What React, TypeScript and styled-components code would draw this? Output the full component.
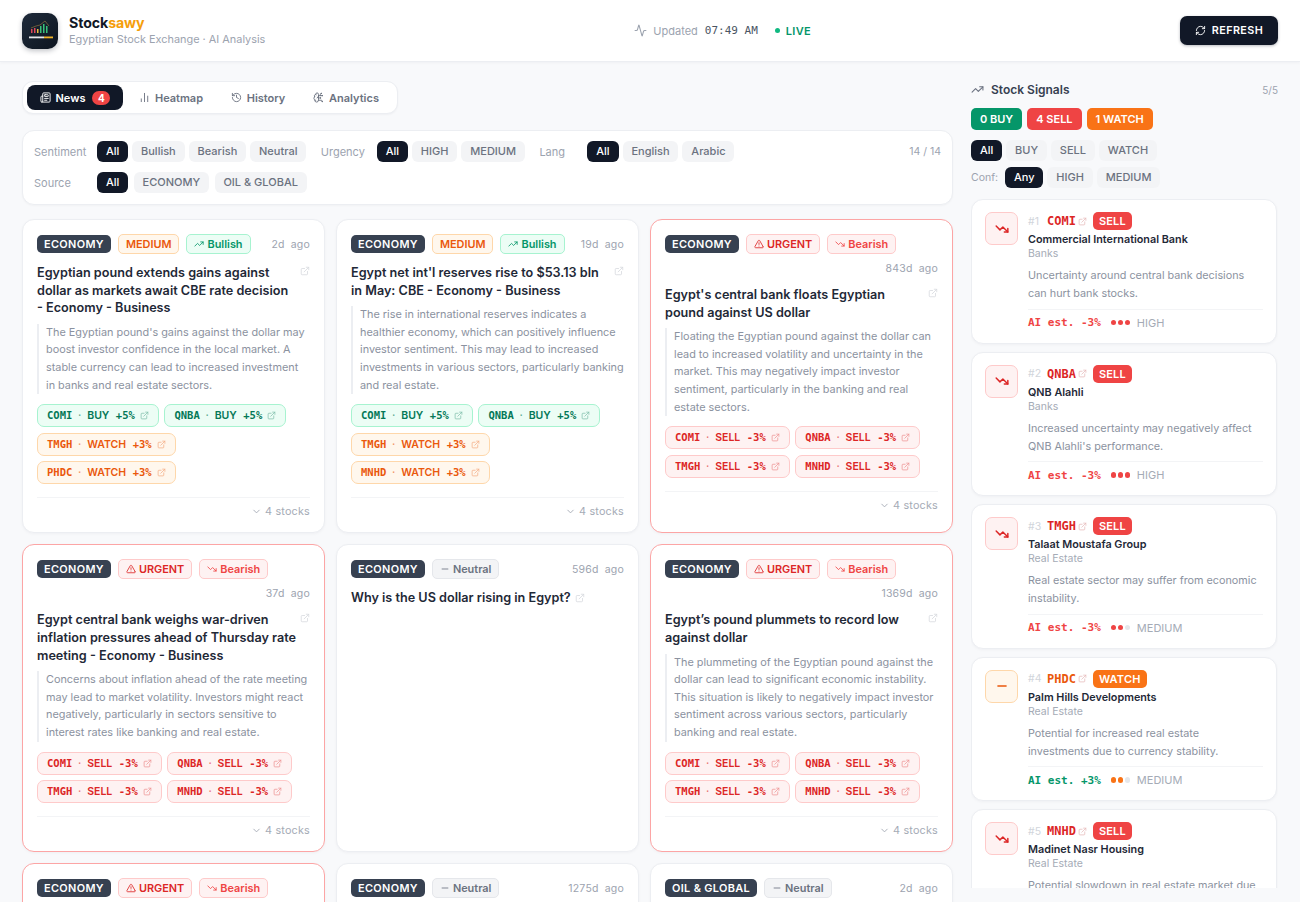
import type { ReactNode } from "react";
import styled, { createGlobalStyle } from "styled-components";
import {
  Activity,
  BrainCircuit,
  ChartNoAxesColumn,
  ChevronDown,
  ExternalLink,
  History,
  Minus,
  Newspaper,
  RefreshCw,
  TrendingDown,
  TrendingUp,
  TriangleAlert,
} from "lucide-react";

type Signal = "BUY" | "SELL" | "WATCH";
type Mood = "Bullish" | "Bearish" | "Neutral";

const MONO = `"DejaVu Sans Mono", "Liberation Mono", monospace`;

const signalColors = {
  BUY: { bg: "#ecfdf5", border: "#a7f3d0", text: "#047857", solid: "#059669" },
  SELL: { bg: "#fef2f2", border: "#fecaca", text: "#dc2626", solid: "#ef4444" },
  WATCH: { bg: "#fff7ed", border: "#fed7aa", text: "#ea580c", solid: "#f97316" },
};

const GlobalStyle = createGlobalStyle`
  html, body {
    margin: 0;
    height: 100%;
    overflow: hidden;
    background: #f8f9fb;
    font-family: Inter, "Noto Sans", sans-serif;
    color: #111827;
  }
  * { box-sizing: border-box; }
`;

const Page = styled.div`
  height: 100vh;
  display: flex;
  flex-direction: column;
  overflow: hidden;
`;

const Header = styled.header`
  flex: 0 0 62px;
  height: 62px;
  background: #fff;
  border-bottom: 1px solid #eceef2;
  box-shadow: 0 1px 3px rgba(17, 24, 39, 0.04);
  padding: 0 22px;
  display: flex;
  justify-content: space-between;
  align-items: center;
`;
const Brand = styled.div`
  display: flex;
  align-items: center;
  gap: 11px;
`;
const LogoBox = styled.div`
  width: 36px;
  height: 36px;
  border-radius: 10px;
  overflow: hidden;
  box-shadow: 0 2px 5px rgba(17, 24, 39, 0.25);
  svg { display: block; }
`;
const BrandName = styled.div`
  font-size: 14.2px;
  font-weight: 700;
  line-height: 18px;
  letter-spacing: -0.1px;
  span { color: #f59e0b; }
`;
const BrandSub = styled.div`
  font-size: 10.9px;
  line-height: 15px;
  color: #9ca3af;
`;
const Status = styled.div`
  display: flex;
  align-items: center;
  font-size: 11px;
  color: #9ca3af;
  svg { margin-right: 6px; }
`;
const Clock = styled.span`
  font-family: ${MONO};
  font-size: 11px;
  font-weight: 500;
  color: #4b5563;
  margin-left: 7px;
`;
const Live = styled.span`
  display: flex;
  align-items: center;
  gap: 6px;
  margin-left: 17px;
  font-size: 11px;
  font-weight: 600;
  letter-spacing: 0.3px;
  color: #059669;
  &::before {
    content: "";
    width: 5px;
    height: 5px;
    border-radius: 50%;
    background: #10b981;
  }
`;
const RefreshButton = styled.button`
  height: 29px;
  width: 98px;
  border: 0;
  border-radius: 7px;
  background: #111827;
  color: #fff;
  font: 600 10.8px Inter, sans-serif;
  letter-spacing: 0.4px;
  display: flex;
  align-items: center;
  justify-content: center;
  gap: 6px;
  box-shadow: 0 1px 3px rgba(17, 24, 39, 0.3);
`;

const Main = styled.main`
  flex: 1;
  min-height: 0;
  display: flex;
  gap: 18px;
  padding: 19px 22px 0;
  overflow: hidden;
`;
const LeftColumn = styled.div`
  flex: 1;
  min-width: 0;
`;
const RightColumn = styled.aside`
  flex: 0 0 307px;
  width: 307px;
  margin-bottom: 14px;
  display: flex;
  flex-direction: column;
  min-height: 0;
`;

const Tabs = styled.nav`
  display: inline-flex;
  height: 33px;
  padding: 3px 4px;
  gap: 2px;
  background: #fff;
  border: 1px solid #eceef2;
  border-radius: 11px;
  box-shadow: 0 1px 2px rgba(17, 24, 39, 0.04);
  vertical-align: top;
`;
const Tab = styled.div<{ $active?: boolean; $w: number }>`
  width: ${(p) => p.$w}px;
  border-radius: 8px;
  display: flex;
  align-items: center;
  justify-content: center;
  gap: 5px;
  font-size: 11px;
  font-weight: 600;
  color: ${(p) => (p.$active ? "#fff" : "#6b7280")};
  background: ${(p) => (p.$active ? "#111827" : "transparent")};
`;
const TabCount = styled.span`
  margin-left: 2px;
  min-width: 18px;
  height: 14px;
  padding: 0 5px;
  border-radius: 7px;
  background: #ef4444;
  color: #fff;
  font-size: 10px;
  line-height: 14px;
  text-align: center;
  font-weight: 700;
`;

const FilterPanel = styled.section`
  margin-top: 16px;
  height: 75px;
  padding: 10px 11px;
  background: #fff;
  border: 1px solid #eceef2;
  border-radius: 12px;
  box-shadow: 0 1px 2px rgba(17, 24, 39, 0.03);
  display: flex;
  flex-direction: column;
  gap: 10px;
`;
const FilterRow = styled.div`
  display: flex;
  align-items: center;
  height: 21px;
`;
const FilterGroup = styled.div<{ $gap?: number }>`
  display: flex;
  align-items: center;
  gap: ${(p) => p.$gap ?? 4}px;
  margin-right: 14.5px;
`;
const FilterLabel = styled.span<{ $w: number }>`
  width: ${(p) => p.$w - 4}px;
  font-size: 11px;
  color: #9ca3af;
`;
const Pill = styled.span<{ $active?: boolean }>`
  height: 21px;
  line-height: 21px;
  padding: 0 8.9px;
  border-radius: 6px;
  font-size: 11px;
  font-weight: 500;
  white-space: nowrap;
  color: ${(p) => (p.$active ? "#fff" : "#6b7280")};
  background: ${(p) => (p.$active ? "#111827" : "#f3f4f6")};
`;
const Count = styled.span`
  margin-left: auto;
  font-size: 10.5px;
  color: #9ca3af;
`;

const NewsGrid = styled.div`
  margin-top: 14px;
  display: grid;
  grid-template-columns: repeat(3, 1fr);
  gap: 11px;
`;
const Card = styled.article<{ $urgent?: boolean }>`
  background: #fff;
  border: 1px solid ${(p) => (p.$urgent ? "#fca5a5" : "#eceef2")};
  border-radius: 12px;
  box-shadow: 0 1px 3px rgba(17, 24, 39, 0.04);
  padding: 14px 14px 12px 14px;
  min-width: 0;
  min-height: 120px;
  display: flex;
  flex-direction: column;
`;
const CardTop = styled.div`
  display: flex;
  flex-wrap: wrap;
  align-items: center;
  gap: 6px 7px;
`;
const SourceTag = styled.span`
  height: 18px;
  line-height: 18px;
  padding: 0 7px;
  border-radius: 5px;
  background: #374151;
  color: #fff;
  font-size: 10.9px;
  font-weight: 600;
  letter-spacing: 0.35px;
`;
const Tag = styled.span<{ $bg: string; $border: string; $color: string }>`
  height: 20px;
  padding: 0 7px;
  border-radius: 5px;
  display: inline-flex;
  align-items: center;
  gap: 3px;
  font-size: 10.9px;
  font-weight: 600;
  color: ${(p) => p.$color};
  background: ${(p) => p.$bg};
  border: 1px solid ${(p) => p.$border};
`;
const Age = styled.span`
  margin-left: auto;
  margin-top: 1px;
  font-size: 10.5px;
  line-height: 15px;
  color: #9ca3af;
  letter-spacing: 0.2px;
  word-spacing: 3px;
`;
const TitleRow = styled.div`
  margin-top: 10px;
  display: flex;
  justify-content: space-between;
  align-items: flex-start;
  gap: 2px;
`;
const Title = styled.h3`
  margin: 0;
  font-size: 12.65px;
  font-weight: 600;
  line-height: 17.6px;
  color: #1f2937;
  svg { margin-left: 4px; vertical-align: -1px; }
`;
const NoBreak = styled.span`
  white-space: nowrap;
`;
const LinkIcon = styled(ExternalLink)`
  flex: none;
  color: #d8dbe0;
  margin-top: 2px;
`;
const Summary = styled.p`
  margin: 7px 0 0;
  padding-left: 7px;
  border-left: 2px solid #eceef2;
  font-size: 10.87px;
  line-height: 17.6px;
  color: #8b92a0;
`;
const Chips = styled.div`
  margin-top: 10px;
  display: flex;
  flex-wrap: wrap;
  gap: 5.6px;
`;
const Chip = styled.span<{ $signal: Signal }>`
  height: 23px;
  padding: 0 9px;
  border-radius: 7px;
  display: inline-flex;
  align-items: baseline;
  line-height: 21px;
  font-family: ${MONO};
  font-size: 10.5px;
  font-weight: 700;
  white-space: nowrap;
  color: ${(p) => signalColors[p.$signal].text};
  background: ${(p) => signalColors[p.$signal].bg};
  border: 1px solid ${(p) => signalColors[p.$signal].border};
  svg { opacity: 0.45; margin-left: 5px; align-self: center; }
`;
const ChipDot = styled.span`
  margin: 0 4.3px;
  font-weight: 400;
  opacity: 0.6;
`;
const ChipWord = styled.span`
  font-family: Inter, sans-serif;
  font-weight: 600;
`;
const ChipPct = styled.span`
  margin-left: 6.5px;
`;
const CardFoot = styled.div`
  margin-top: 13px;
  border-top: 1px solid #f3f4f6;
  padding-top: 5px;
  display: flex;
  justify-content: flex-end;
  align-items: center;
  gap: 3px;
  font-size: 10.8px;
  line-height: 17px;
  letter-spacing: 0.2px;
  color: #a5abb6;
`;

const SideHead = styled.div`
  height: 17px;
  display: flex;
  align-items: center;
  gap: 7px;
  font-size: 12px;
  font-weight: 600;
  color: #374151;
  svg { color: #6b7280; }
`;
const SideCount = styled.span`
  margin-left: auto;
  font-size: 10px;
  font-weight: 400;
  color: #9ca3af;
`;
const Totals = styled.div`
  display: flex;
  gap: 5px;
  margin-top: 10px;
`;
const Total = styled.span<{ $signal: Signal }>`
  height: 22px;
  line-height: 22px;
  padding: 0 9px;
  border-radius: 5px;
  color: #fff;
  font-size: 11px;
  font-weight: 600;
  background: ${(p) => signalColors[p.$signal].solid};
`;
const SideFilters = styled.div<{ $top: number }>`
  display: flex;
  align-items: center;
  gap: 4px;
  margin-top: ${(p) => p.$top}px;
`;
const ConfLabel = styled.span`
  font-size: 10.5px;
  color: #9ca3af;
  margin-right: 3px;
`;
const SignalList = styled.div`
  margin-top: 11px;
  flex: 1;
  min-height: 0;
  overflow: hidden;
  padding-right: 1px;
  display: flex;
  flex-direction: column;
  gap: 8px;
`;
const SignalCard = styled.article`
  flex: none;
  height: 144.5px;
  background: #fff;
  border: 1px solid #eceef2;
  border-radius: 12px;
  box-shadow: 0 1px 3px rgba(17, 24, 39, 0.04);
  padding: 12px 13px 0 13px;
  display: flex;
  gap: 10px;
`;
const SignalIcon = styled.div<{ $signal: Signal }>`
  flex: none;
  width: 33px;
  height: 33px;
  border-radius: 7px;
  display: flex;
  align-items: center;
  justify-content: center;
  color: ${(p) => signalColors[p.$signal].text};
  background: ${(p) => signalColors[p.$signal].bg};
  border: 1px solid ${(p) => signalColors[p.$signal].border};
`;
const SignalBody = styled.div`
  flex: 1;
  min-width: 0;
`;
const SignalTop = styled.div`
  display: flex;
  align-items: center;
  height: 18px;
`;
const Rank = styled.span`
  width: 19px;
  font-size: 10.5px;
  color: #d1d5db;
`;
const Ticker = styled.span<{ $signal: Signal }>`
  font-family: ${MONO};
  font-size: 12px;
  font-weight: 700;
  color: ${(p) => signalColors[p.$signal].text};
`;
const TickerLink = styled(ExternalLink)`
  color: #e5b9b9;
  margin: 0 6px 0 2px;
`;
const SignalBadge = styled.span<{ $signal: Signal }>`
  height: 18px;
  line-height: 18px;
  padding: 0 6px;
  border-radius: 5px;
  color: #fff;
  font-size: 11px;
  font-weight: 600;
  letter-spacing: 0.2px;
  background: ${(p) => signalColors[p.$signal].solid};
`;
const CompanyName = styled.div`
  margin-top: 2px;
  font-size: 10.8px;
  font-weight: 600;
  line-height: 15px;
  color: #1f2937;
`;
const Sector = styled.div`
  font-size: 10.5px;
  line-height: 13px;
  color: #a5abb6;
`;
const Reason = styled.p`
  margin: 7px 0 0;
  font-size: 10.8px;
  line-height: 18px;
  color: #8b92a0;
`;
const SignalFoot = styled.div`
  margin-top: 5.5px;
  border-top: 1px solid #f3f4f6;
  padding-top: 6px;
  height: 21px;
  display: flex;
  align-items: center;
  gap: 10px;
`;
const Estimate = styled.span<{ $up: boolean }>`
  font-family: ${MONO};
  font-size: 11px;
  font-weight: 700;
  color: ${(p) => (p.$up ? "#059669" : "#ef4444")};
`;
const Confidence = styled.span`
  display: flex;
  align-items: center;
  gap: 1.5px;
  font-size: 11px;
  color: #a5abb6;
`;
const Dot = styled.i<{ $color: string }>`
  width: 5.5px;
  height: 5.5px;
  border-radius: 50%;
  background: ${(p) => p.$color};
`;
const ConfText = styled.span`
  margin-left: 5px;
`;

function Logo() {
  return (
    <LogoBox>
      <svg width="36" height="36" viewBox="0 0 36 36">
        <defs>
          <linearGradient id="lg" x1="0" y1="0" x2="1" y2="1">
            <stop offset="0" stopColor="#1e2a3a" />
            <stop offset="1" stopColor="#0d1520" />
          </linearGradient>
        </defs>
        <rect width="36" height="36" fill="url(#lg)" />
        <path d="M9 15l5-2 4-1 5-4 4 5" fill="none" stroke="#6b5b3a" strokeWidth="1" />
        <rect x="9" y="16" width="1.5" height="4" fill="#e0475a" />
        <rect x="12" y="15" width="1.5" height="5" fill="#e0475a" />
        <rect x="15" y="16" width="1.5" height="4" fill="#e7b93c" />
        <rect x="18" y="13" width="1.5" height="7" fill="#39c07a" />
        <rect x="21" y="11" width="1.5" height="9" fill="#39c07a" />
        <rect x="24" y="13" width="1.5" height="7" fill="#39c07a" />
        <rect x="7" y="23.5" width="15" height="1.8" fill="#e5e7eb" />
        <rect x="22" y="23.5" width="9" height="1.8" fill="#f0b429" />
      </svg>
    </LogoBox>
  );
}

function MoodTag({ mood }: { mood: Mood }) {
  if (mood === "Bullish")
    return (
      <Tag $bg="#ecfdf5" $border="#a7f3d0" $color="#059669">
        <TrendingUp size={10} /> Bullish
      </Tag>
    );
  if (mood === "Bearish")
    return (
      <Tag $bg="#fef2f2" $border="#fecaca" $color="#ef4444">
        <TrendingDown size={10} /> Bearish
      </Tag>
    );
  return (
    <Tag $bg="#f3f4f6" $border="#e5e7eb" $color="#6b7280">
      <Minus size={10} /> Neutral
    </Tag>
  );
}

function UrgencyTag({ urgent }: { urgent: boolean }) {
  if (urgent)
    return (
      <Tag $bg="#fef2f2" $border="#fecaca" $color="#dc2626">
        <TriangleAlert size={10} /> URGENT
      </Tag>
    );
  return (
    <Tag $bg="#fff7ed" $border="#fed7aa" $color="#ea580c">
      MEDIUM
    </Tag>
  );
}

interface NewsItem {
  source: string;
  urgency?: "URGENT" | "MEDIUM";
  mood: Mood;
  age: string;
  title?: ReactNode;
  summary?: string;
  chips?: [string, Signal, string][];
}

const sellFour: [string, Signal, string][] = [
  ["COMI", "SELL", "-3%"],
  ["QNBA", "SELL", "-3%"],
  ["TMGH", "SELL", "-3%"],
  ["MNHD", "SELL", "-3%"],
];

const news: NewsItem[] = [
  {
    source: "ECONOMY",
    urgency: "MEDIUM",
    mood: "Bullish",
    age: "2d ago",
    title: (
      <>
        Egyptian pound extends gains against dollar as markets await CBE rate decision{" "}
        <NoBreak>- Economy - Business</NoBreak>
      </>
    ),
    summary:
      "The Egyptian pound's gains against the dollar may boost investor confidence in the local market. A stable currency can lead to increased investment in banks and real estate sectors.",
    chips: [
      ["COMI", "BUY", "+5%"],
      ["QNBA", "BUY", "+5%"],
      ["TMGH", "WATCH", "+3%"],
      ["PHDC", "WATCH", "+3%"],
    ],
  },
  {
    source: "ECONOMY",
    urgency: "MEDIUM",
    mood: "Bullish",
    age: "19d ago",
    title: "Egypt net int'l reserves rise to $53.13 bln in May: CBE - Economy - Business",
    summary:
      "The rise in international reserves indicates a healthier economy, which can positively influence investor sentiment. This may lead to increased investments in various sectors, particularly banking and real estate.",
    chips: [
      ["COMI", "BUY", "+5%"],
      ["QNBA", "BUY", "+5%"],
      ["TMGH", "WATCH", "+3%"],
      ["MNHD", "WATCH", "+3%"],
    ],
  },
  {
    source: "ECONOMY",
    urgency: "URGENT",
    mood: "Bearish",
    age: "843d ago",
    title: "Egypt's central bank floats Egyptian pound against US dollar",
    summary:
      "Floating the Egyptian pound against the dollar can lead to increased volatility and uncertainty in the market. This may negatively impact investor sentiment, particularly in the banking and real estate sectors.",
    chips: sellFour,
  },
  {
    source: "ECONOMY",
    urgency: "URGENT",
    mood: "Bearish",
    age: "37d ago",
    title: "Egypt central bank weighs war-driven inflation pressures ahead of Thursday rate meeting - Economy - Business",
    summary:
      "Concerns about inflation ahead of the rate meeting may lead to market volatility. Investors might react negatively, particularly in sectors sensitive to interest rates like banking and real estate.",
    chips: sellFour,
  },
  {
    source: "ECONOMY",
    mood: "Neutral",
    age: "596d ago",
    title: "Why is the US dollar rising in Egypt?",
  },
  {
    source: "ECONOMY",
    urgency: "URGENT",
    mood: "Bearish",
    age: "1369d ago",
    title: "Egypt\u2019s pound plummets to record low against dollar",
    summary:
      "The plummeting of the Egyptian pound against the dollar can lead to significant economic instability. This situation is likely to negatively impact investor sentiment across various sectors, particularly banking and real estate.",
    chips: sellFour,
  },
  { source: "ECONOMY", urgency: "URGENT", mood: "Bearish", age: "" },
  { source: "ECONOMY", mood: "Neutral", age: "1275d ago" },
  { source: "OIL & GLOBAL", mood: "Neutral", age: "2d ago" },
];

const signals: {
  ticker: string;
  signal: Signal;
  company: string;
  sector: string;
  reason: string;
  est: string;
  conf: "HIGH" | "MEDIUM";
}[] = [
  {
    ticker: "COMI",
    signal: "SELL",
    company: "Commercial International Bank",
    sector: "Banks",
    reason: "Uncertainty around central bank decisions can hurt bank stocks.",
    est: "-3%",
    conf: "HIGH",
  },
  {
    ticker: "QNBA",
    signal: "SELL",
    company: "QNB Alahli",
    sector: "Banks",
    reason: "Increased uncertainty may negatively affect QNB Alahli's performance.",
    est: "-3%",
    conf: "HIGH",
  },
  {
    ticker: "TMGH",
    signal: "SELL",
    company: "Talaat Moustafa Group",
    sector: "Real Estate",
    reason: "Real estate sector may suffer from economic instability.",
    est: "-3%",
    conf: "MEDIUM",
  },
  {
    ticker: "PHDC",
    signal: "WATCH",
    company: "Palm Hills Developments",
    sector: "Real Estate",
    reason: "Potential for increased real estate investments due to currency stability.",
    est: "+3%",
    conf: "MEDIUM",
  },
  {
    ticker: "MNHD",
    signal: "SELL",
    company: "Madinet Nasr Housing",
    sector: "Real Estate",
    reason: "Potential slowdown in real estate market due to economic uncertainty.",
    est: "-3%",
    conf: "MEDIUM",
  },
];

function NewsCard({ item }: { item: NewsItem }) {
  const short = !item.summary;
  return (
    <Card $urgent={item.urgency === "URGENT"}>
      <CardTop>
        <SourceTag>{item.source}</SourceTag>
        {item.urgency && <UrgencyTag urgent={item.urgency === "URGENT"} />}
        <MoodTag mood={item.mood} />
        {item.age && <Age>{item.age}</Age>}
      </CardTop>
      {item.title && (
        <TitleRow>
          <Title>
            {item.title}
            {short && <LinkIcon size={10} />}
          </Title>
          {!short && <LinkIcon size={10} />}
        </TitleRow>
      )}
      {item.summary && <Summary>{item.summary}</Summary>}
      {item.chips && (
        <Chips>
          {item.chips.map(([ticker, signal, pct]) => (
            <Chip key={ticker} $signal={signal}>
              {ticker}
              <ChipDot>·</ChipDot>
              <ChipWord>{signal}</ChipWord>
              <ChipPct>{pct}</ChipPct>
              <ExternalLink size={9} />
            </Chip>
          ))}
        </Chips>
      )}
      {item.chips && (
        <CardFoot>
          <ChevronDown size={11} /> {item.chips.length} stocks
        </CardFoot>
      )}
    </Card>
  );
}

function SignalRow({ rank, s }: { rank: number; s: (typeof signals)[number] }) {
  const dotColor = s.signal === "WATCH" ? "#f97316" : "#ef4444";
  const filled = s.conf === "HIGH" ? 3 : 2;
  return (
    <SignalCard>
      <SignalIcon $signal={s.signal}>
        {s.signal === "WATCH" ? <Minus size={14} strokeWidth={2.5} /> : <TrendingDown size={14} strokeWidth={2.5} />}
      </SignalIcon>
      <SignalBody>
        <SignalTop>
          <Rank>#{rank}</Rank>
          <Ticker $signal={s.signal}>{s.ticker}</Ticker>
          <TickerLink size={9} />
          <SignalBadge $signal={s.signal}>{s.signal}</SignalBadge>
        </SignalTop>
        <CompanyName>{s.company}</CompanyName>
        <Sector>{s.sector}</Sector>
        <Reason>{s.reason}</Reason>
        <SignalFoot>
          <Estimate $up={s.est.startsWith("+")}>AI est. {s.est}</Estimate>
          <Confidence>
            {[0, 1, 2].map((i) => (
              <Dot key={i} $color={i < filled ? dotColor : "#e5e7eb"} />
            ))}
            <ConfText>{s.conf}</ConfText>
          </Confidence>
        </SignalFoot>
      </SignalBody>
    </SignalCard>
  );
}

export default function App() {
  return (
    <Page>
      <GlobalStyle />
      <Header>
        <Brand>
          <Logo />
          <div>
            <BrandName>
              Stock<span>sawy</span>
            </BrandName>
            <BrandSub>Egyptian Stock Exchange · AI Analysis</BrandSub>
          </div>
        </Brand>
        <Status>
          <Activity size={13} />
          Updated
          <Clock>07:49 AM</Clock>
          <Live>LIVE</Live>
        </Status>
        <RefreshButton>
          <RefreshCw size={11} />
          REFRESH
        </RefreshButton>
      </Header>
      <Main>
        <LeftColumn>
          <Tabs>
            <Tab $active $w={96}>
              <Newspaper size={11} />
              News
              <TabCount>4</TabCount>
            </Tab>
            <Tab $w={92}>
              <ChartNoAxesColumn size={11} />
              Heatmap
            </Tab>
            <Tab $w={78}>
              <History size={11} />
              History
            </Tab>
            <Tab $w={94}>
              <BrainCircuit size={11} />
              Analytics
            </Tab>
          </Tabs>
          <FilterPanel>
            <FilterRow>
              <FilterGroup>
                <FilterLabel $w={63}>Sentiment</FilterLabel>
                <Pill $active>All</Pill>
                <Pill>Bullish</Pill>
                <Pill>Bearish</Pill>
                <Pill>Neutral</Pill>
              </FilterGroup>
              <FilterGroup>
                <FilterLabel $w={56}>Urgency</FilterLabel>
                <Pill $active>All</Pill>
                <Pill>HIGH</Pill>
                <Pill>MEDIUM</Pill>
              </FilterGroup>
              <FilterGroup>
                <FilterLabel $w={48}>Lang</FilterLabel>
                <Pill $active>All</Pill>
                <Pill>English</Pill>
                <Pill>Arabic</Pill>
              </FilterGroup>
              <Count>14 / 14</Count>
            </FilterRow>
            <FilterRow>
              <FilterGroup $gap={5.5}>
                <FilterLabel $w={61.5}>Source</FilterLabel>
                <Pill $active>All</Pill>
                <Pill>ECONOMY</Pill>
                <Pill>OIL &amp; GLOBAL</Pill>
              </FilterGroup>
            </FilterRow>
          </FilterPanel>
          <NewsGrid>
            {news.map((item, i) => (
              <NewsCard key={i} item={item} />
            ))}
          </NewsGrid>
        </LeftColumn>
        <RightColumn>
          <SideHead>
            <TrendingUp size={13} />
            Stock Signals
            <SideCount>5/5</SideCount>
          </SideHead>
          <Totals>
            <Total $signal="BUY">0 BUY</Total>
            <Total $signal="SELL">4 SELL</Total>
            <Total $signal="WATCH">1 WATCH</Total>
          </Totals>
          <SideFilters $top={10}>
            <Pill $active>All</Pill>
            <Pill>BUY</Pill>
            <Pill>SELL</Pill>
            <Pill>WATCH</Pill>
          </SideFilters>
          <SideFilters $top={6}>
            <ConfLabel>Conf:</ConfLabel>
            <Pill $active>Any</Pill>
            <Pill>HIGH</Pill>
            <Pill>MEDIUM</Pill>
          </SideFilters>
          <SignalList>
            {signals.map((s, i) => (
              <SignalRow key={s.ticker} rank={i + 1} s={s} />
            ))}
          </SignalList>
        </RightColumn>
      </Main>
    </Page>
  );
}
